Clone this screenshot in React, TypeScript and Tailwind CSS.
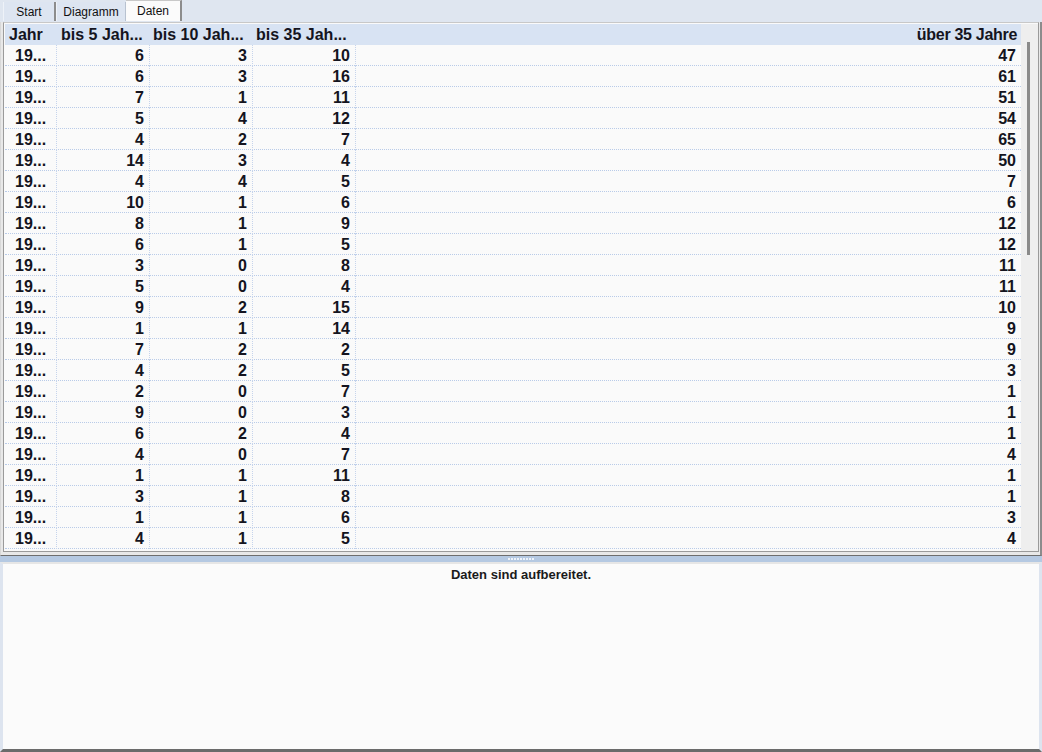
const rows: number[][] = [
  [6, 3, 10, 47],
  [6, 3, 16, 61],
  [7, 1, 11, 51],
  [5, 4, 12, 54],
  [4, 2, 7, 65],
  [14, 3, 4, 50],
  [4, 4, 5, 7],
  [10, 1, 6, 6],
  [8, 1, 9, 12],
  [6, 1, 5, 12],
  [3, 0, 8, 11],
  [5, 0, 4, 11],
  [9, 2, 15, 10],
  [1, 1, 14, 9],
  [7, 2, 2, 9],
  [4, 2, 5, 3],
  [2, 0, 7, 1],
  [9, 0, 3, 1],
  [6, 2, 4, 1],
  [4, 0, 7, 4],
  [1, 1, 11, 1],
  [3, 1, 8, 1],
  [1, 1, 6, 3],
  [4, 1, 5, 4],
];

const cols = "grid grid-cols-[52px_93px_103px_103px_1fr]";

export default function App() {
  return (
    <div
      className="w-[1042px] h-[752px] bg-[#dfe6f0] flex flex-col overflow-hidden"
      style={{ fontFamily: '"Liberation Sans", Arial, sans-serif' }}
    >
      {/* tab strip */}
      <div className="h-[22px] flex items-start pl-[3px] text-[12px] text-[#111]">
        <div className="w-[53px] h-[19px] mt-[2px] flex items-center justify-center bg-[#dde5f1] border-l border-l-[#eef2f8] border-r-2 border-r-[#8c8c8c]">
          Start
        </div>
        <div className="w-[70px] h-[19px] mt-[2px] flex items-center justify-center bg-[#dde5f1] border-l border-l-[#eef2f8] border-r border-r-[#b8c2d0]">
          Diagramm
        </div>
        <div className="w-[56px] h-[21px] flex items-center justify-center bg-[#fbfbfb] border-t border-t-[#c8c8c8] border-r-2 border-r-[#8c8c8c]">
          Daten
        </div>
      </div>

      {/* data grid panel */}
      <div className="h-[534px] bg-[#e8e8e8] border-l border-l-[#d8d8d8] border-r-2 border-r-[#8c8c8c] border-b border-b-[#6e6e6e] pl-[2px] pr-[1px] pb-[3px]">
        <div className="h-full border border-[#9a9a9a] border-t-[#c8c8c8] bg-[#fafafa] flex overflow-hidden pl-[1px] pt-[1px]">
          <div className="flex-1 flex flex-col overflow-hidden">
            <div className={`${cols} h-[21px] shrink-0 bg-[#d8e3f3] text-[16px] font-bold text-[#141420] leading-[22px]`}>
              <div className="pl-[4px]">Jahr</div>
              <div className="pl-[4px]">bis 5 Jah...</div>
              <div className="pl-[3px]">bis 10 Jah...</div>
              <div className="pl-[3px]">bis 35 Jah...</div>
              <div className="text-right pr-[4px] tracking-[-0.3px]">über 35 Jahre</div>
            </div>
            {rows.map((r, i) => (
              <div
                key={i}
                className={`${cols} h-[21px] shrink-0 border-b border-dotted border-b-[#b9cbe8] text-[16px] font-bold text-[#141420] leading-[21px]`}
              >
                <div className="pl-[10px] border-r border-dotted border-r-[#c6d4ec]">19...</div>
                {r.map((v, j) => (
                  <div
                    key={j}
                    className={
                      j < 3
                        ? "text-right pr-[5px] border-r border-dotted border-r-[#c6d4ec]"
                        : "text-right pr-[5px]"
                    }
                  >
                    {v}
                  </div>
                ))}
              </div>
            ))}
          </div>
          {/* vertical scrollbar */}
          <div className="w-[17px] bg-[#eeeeee] pt-[18px] pl-[6px]">
            <div className="w-[3px] h-[213px] bg-[#8a8a8a]" />
          </div>
        </div>
      </div>

      {/* splitter */}
      <div className="h-[6px] bg-[#b5c9e2] flex items-center justify-center">
        <div className="flex gap-[1px]">
          {Array.from({ length: 9 }).map((_, i) => (
            <div key={i} className="w-[2px] h-[2px] bg-[#eef3fa]" />
          ))}
        </div>
      </div>

      {/* status panel */}
      <div className="flex-1 border-t-2 border-t-[#e6e6e6] border-l-[3px] border-l-[#dde4ef] border-r-[3px] border-r-[#dde4ef] border-b-[3px] border-b-[#6b6b6b] bg-[#fbfbfb]">
        <div className="text-center text-[13px] font-bold text-[#1a1a1a] leading-[16px] pt-[3px]">
          Daten sind aufbereitet.
        </div>
      </div>
    </div>
  );
}
